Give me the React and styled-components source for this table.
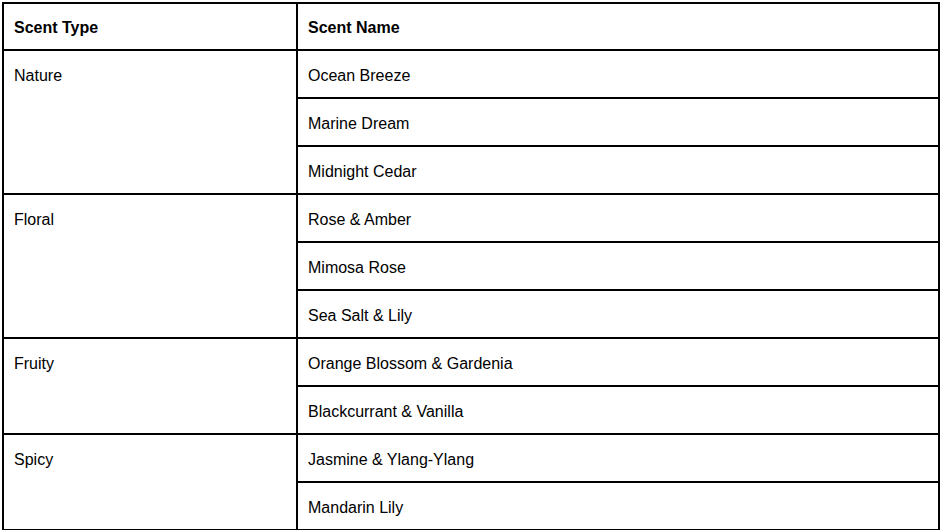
import React from "react";
import styled, { createGlobalStyle } from "styled-components";

const GlobalStyle = createGlobalStyle`
  body {
    margin: 0;
    background: #ffffff;
    font-family: "Liberation Sans", Arial, sans-serif;
    color: #000000;
  }
`;

const Wrapper = styled.div`
  padding: 2px 1px 0 2px;
`;

const Table = styled.table`
  width: 938px;
  border-collapse: collapse;
  font-size: 16px;
`;

const HeadCell = styled.th`
  border: 2px solid #000;
  padding: 15px 10px 12px;
  text-align: left;
  font-weight: bold;
  line-height: 18px;
  width: ${(p) => (p.$wide ? "auto" : "272px")};
`;

const Cell = styled.td`
  border: 2px solid #000;
  padding: 16px 10px 12px;
  text-align: left;
  vertical-align: top;
  line-height: 18px;
`;

const data = [
  { type: "Nature", names: ["Ocean Breeze", "Marine Dream", "Midnight Cedar"] },
  { type: "Floral", names: ["Rose & Amber", "Mimosa Rose", "Sea Salt & Lily"] },
  { type: "Fruity", names: ["Orange Blossom & Gardenia", "Blackcurrant & Vanilla"] },
  { type: "Spicy", names: ["Jasmine & Ylang-Ylang", "Mandarin Lily"] },
];

const App = () => {
  return (
    <Wrapper>
      <GlobalStyle />
      <Table>
        <thead>
          <tr>
            <HeadCell>Scent Type</HeadCell>
            <HeadCell $wide>Scent Name</HeadCell>
          </tr>
        </thead>
        <tbody>
          {data.map((group) =>
            group.names.map((name, i) => (
              <tr key={group.type + name}>
                {i === 0 && <Cell rowSpan={group.names.length}>{group.type}</Cell>}
                <Cell>{name}</Cell>
              </tr>
            ))
          )}
        </tbody>
      </Table>
    </Wrapper>
  );
};

export default App;
